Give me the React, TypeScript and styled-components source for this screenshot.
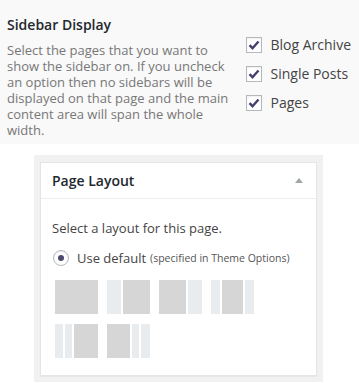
import styled, { createGlobalStyle } from "styled-components";

const GlobalStyle = createGlobalStyle`
  body {
    margin: 0;
    background: #fff;
    font-family: "Open Sans", "Liberation Sans", sans-serif;
    color: #444;
  }
`;

const Options = styled.section`
  background: #f9f9f9;
  display: flex;
  justify-content: space-between;
  padding: 14px 8px 15px 7px;
  height: 115px;
`;

const OptionText = styled.div`
  width: 228px;
`;

const OptionTitle = styled.h3`
  margin: 0 0 6px;
  font-size: 14px;
  font-weight: 600;
  color: #23282d;
  line-height: 22px;
`;

const OptionDesc = styled.p`
  margin: 0;
  font-size: 13px;
  line-height: 16px;
  color: #777;
`;

const CheckList = styled.div`
  display: flex;
  flex-direction: column;
  gap: 13px;
  padding-top: 23px;
`;

const CheckRow = styled.label`
  display: flex;
  align-items: center;
  gap: 9px;
  font-size: 14px;
  line-height: 16px;
  color: #444;
`;

const CheckBox = styled.span`
  width: 14px;
  height: 14px;
  border: 1px solid #b4b9be;
  background: #fff;
  box-shadow: inset 0 1px 2px rgba(0, 0, 0, 0.07);
  display: flex;
  align-items: center;
  justify-content: center;
`;

const Frame = styled.div`
  margin: 11px 0 0 34px;
  width: 277px;
  background: #f1f1f1;
  padding: 7px 6px 6px;
`;

const Box = styled.div`
  background: #fff;
  border: 1px solid #e5e5e5;
  box-shadow: 0 1px 1px rgba(0, 0, 0, 0.04);
`;

const BoxHeader = styled.div`
  height: 35px;
  border-bottom: 1px solid #eee;
  display: flex;
  align-items: center;
  justify-content: space-between;
  padding: 0 13px 0 11px;
`;

const BoxTitle = styled.h2`
  margin: 0;
  font-size: 14px;
  font-weight: 600;
  color: #23282d;
`;

const Arrow = styled.span`
  width: 0;
  height: 0;
  border-left: 4px solid transparent;
  border-right: 4px solid transparent;
  border-bottom: 5px solid #a0a5aa;
`;

const BoxBody = styled.div`
  padding: 19px 11px 17px;
`;

const Intro = styled.p`
  margin: 0 0 11px;
  font-size: 13px;
  line-height: 20px;
  color: #444;
`;

const RadioRow = styled.label`
  display: flex;
  align-items: center;
  gap: 8px;
  font-size: 13px;
  color: #444;
  padding-left: 1px;
`;

const Radio = styled.span`
  width: 14px;
  height: 14px;
  border-radius: 50%;
  border: 1px solid #b4b9be;
  box-shadow: inset 0 1px 2px rgba(0, 0, 0, 0.07);
  display: flex;
  align-items: center;
  justify-content: center;

  &::after {
    content: "";
    width: 6px;
    height: 6px;
    border-radius: 50%;
    background: #4b4a6e;
  }
`;

const Hint = styled.span`
  font-size: 10.5px;
  color: #555;
  margin-left: -4px;
`;

const Thumbs = styled.div`
  display: grid;
  grid-template-columns: repeat(4, 43px);
  gap: 10px 9px;
  margin: 13px 0 0 3px;
`;

const Thumb = styled.div`
  display: flex;
  gap: 2px;
  height: 34px;
  width: 43px;
`;

const Seg = styled.div<{ $w: number; $main?: boolean }>`
  width: ${({ $w }) => $w}px;
  background: ${({ $main }) => ($main ? "#d6d6d6" : "#e8ecef")};
`;

const layouts: { w: number; main?: boolean }[][] = [
  [{ w: 43, main: true }],
  [{ w: 14 }, { w: 27, main: true }],
  [{ w: 27, main: true }, { w: 14 }],
  [{ w: 9 }, { w: 21, main: true }, { w: 9 }],
  [{ w: 8 }, { w: 7 }, { w: 24, main: true }],
  [{ w: 23, main: true }, { w: 7 }, { w: 9 }],
];

const pages = ["Blog Archive", "Single Posts", "Pages"];

const Check = () => (
  <svg width="12" height="10" viewBox="0 0 12 10">
    <path d="M1.5 5.2 L4.5 8.2 L10.5 1.5" fill="none" stroke="#46406e" strokeWidth="2.4" />
  </svg>
);

export default function App() {
  return (
    <>
      <GlobalStyle />
      <Options>
        <OptionText>
          <OptionTitle>Sidebar Display</OptionTitle>
          <OptionDesc>
            Select the pages that you want to show the sidebar on. If you uncheck an option
            then no sidebars will be displayed on that page and the main content area will
            span the whole width.
          </OptionDesc>
        </OptionText>
        <CheckList>
          {pages.map((p) => (
            <CheckRow key={p}>
              <CheckBox>
                <Check />
              </CheckBox>
              {p}
            </CheckRow>
          ))}
        </CheckList>
      </Options>
      <Frame>
        <Box>
          <BoxHeader>
            <BoxTitle>Page Layout</BoxTitle>
            <Arrow />
          </BoxHeader>
          <BoxBody>
            <Intro>Select a layout for this page.</Intro>
            <RadioRow>
              <Radio />
              Use default <Hint>(specified in Theme Options)</Hint>
            </RadioRow>
            <Thumbs>
              {layouts.map((segs, i) => (
                <Thumb key={i}>
                  {segs.map((s, j) => (
                    <Seg key={j} $w={s.w} $main={s.main} />
                  ))}
                </Thumb>
              ))}
            </Thumbs>
          </BoxBody>
        </Box>
      </Frame>
    </>
  );
}
